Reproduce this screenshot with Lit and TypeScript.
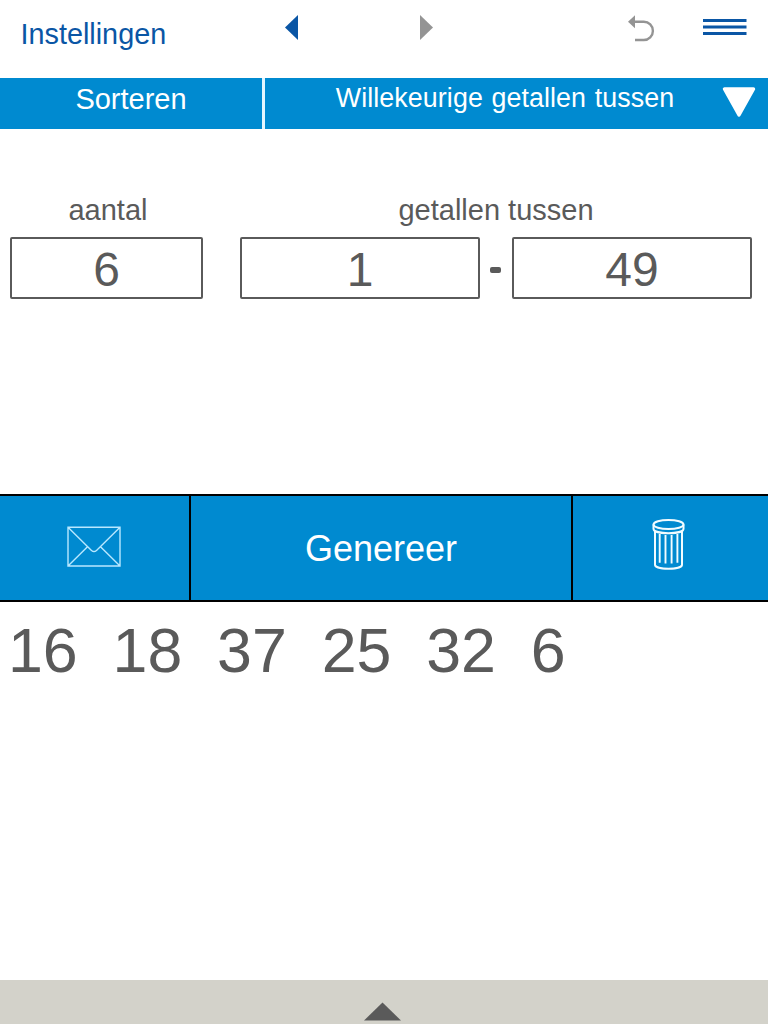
import { LitElement, html, css } from "lit";
import { customElement, state } from "lit/decorators.js";

@customElement("app-root")
export class AppRoot extends LitElement {
  @state() private numbers = [16, 18, 37, 25, 32, 6];

  static styles = css`
    :host {
      display: flex;
      flex-direction: column;
      height: 1024px;
      overflow: hidden;
      background: #fff;
      color: #5a5a5a;
      font-family: "Liberation Sans", Arial, sans-serif;
      font-size: 29px;
    }
    * { box-sizing: border-box; }
    svg { display: block; }
    header {
      height: 78px;
      display: grid;
      grid-template-columns: 285px 134px 208px 75px 66px;
      align-items: start;
    }
    .settings { color: #0a56a5; padding-left: 20.5px; line-height: 69px; font-size: 28.8px; }
    .arrow { margin-top: 15px; }
    .undo { margin-top: 14px; }
    .menu { margin-top: 18px; }
    .tabs {
      height: 51px;
      display: grid;
      grid-template-columns: 262px 1fr 46px;
      background: #008ad0;
      color: #fff;
      text-align: center;
    }
    .tab { line-height: 42px; }
    .mode { border-left: 3px solid #e4f6ff; line-height: 41px; font-size: 26.8px; letter-spacing: .1px; padding-left: 23px; word-spacing: 1px; }
    .form {
      height: 365px;
      padding: 61px 16px 0 10px;
      display: grid;
      grid-template-columns: 193px 512px;
      grid-template-rows: 47px 62px;
      column-gap: 37px;
      text-align: center;
    }
    .label { line-height: 41px; }
    .label.first { padding-left: 3px; }
    .range { display: grid; grid-template-columns: 240px 32px 240px; align-items: center; }
    .field {
      height: 62px;
      border: 2px solid #5a5a5a;
      border-radius: 2px;
      font-size: 48px;
      line-height: 61px;
    }
    .dash { justify-self: center; width: 11px; height: 6px; border-radius: 2px; background: #5a5a5a; margin-top: 3px; margin-right: 1px; }
    .actions {
      height: 108px;
      display: grid;
      grid-template-columns: 189px 384px 1fr;
      border: solid #000;
      border-width: 2px 0;
      background: #008ad0;
      color: #fff;
    }
    .mail { padding: 30px 0 0 67px; }
    .go { border: solid #000; border-width: 0 2px; text-align: center; line-height: 105px; font-size: 36px; }
    .trash { padding: 22px 0 0 78px; }
    .result { flex: 1; padding-left: 8px; white-space: pre; font-size: 62.7px; line-height: 97px; }
    footer { height: 44px; background: #d3d2ca; padding: 22px 0 0 364px; }
  `;

  render() {
    return html`
      <header>
        <div class="settings">Instellingen</div>
        <svg class="arrow" width="13" height="25"><path d="M13 0v25L0 12.5z" fill="#0a56a5"/></svg>
        <svg class="arrow" width="14" height="25"><path d="M1 0v25l13-12.5z" fill="#949494"/></svg>
        <svg class="undo" width="28" height="30"><path d="M1 7.7 8 1.2v13z" fill="#949494"/><path d="M6 7.8h10.8a9.1 9.1 0 0 1 0 18.2H8" fill="none" stroke="#949494" stroke-width="2.4"/></svg>
        <svg class="menu" width="45" height="18"><path d="M1 2.5h43.5M1 9h43.5M1 15.5h43.5" stroke="#0a56a5" stroke-width="3"/></svg>
      </header>
      <div class="tabs">
        <div class="tab">Sorteren</div>
        <div class="tab mode">Willekeurige getallen tussen</div>
        <svg width="46" height="51"><path d="M2.5 11h29L17 37z" fill="#fff" stroke="#fff" stroke-width="3.4" stroke-linejoin="round"/></svg>
      </div>
      <div class="form">
        <div class="label first">aantal</div>
        <div class="label">getallen tussen</div>
        <div class="field">6</div>
        <div class="range">
          <div class="field">1</div>
          <div class="dash"></div>
          <div class="field">49</div>
        </div>
      </div>
      <div class="actions">
        <div class="mail">
          <svg width="54" height="42" fill="none" stroke="#b9e8ff" stroke-width="1.4"><path d="M1 1.2h52v38.8H1zM1 1.2l23.5 23.2q2.5 2.4 5 0L53 1.2M1 40l19.5-19.2M53 40 33.5 20.8"/></svg>
        </div>
        <div class="go">Genereer</div>
        <div class="trash">
          <svg width="36" height="54" fill="none" stroke="#f2fcff" stroke-width="2"><ellipse cx="17.5" cy="6.5" rx="15" ry="4.6"/><path d="M2.5 6.5v4.2c0 6 30 6 30 0V6.5M4 13.5v33.2c0 5.3 27 5.3 27 0V13.5"/><path d="M8.7 16v28.8M14.5 17v28.6M20.6 17v28.6M26.4 16v28.8" stroke-width="1.9"/></svg>
        </div>
      </div>
      <div class="result">${this.numbers.join("  ")}</div>
      <footer><svg width="38" height="22"><path d="M0 18.5 18.5 .5 37 18.5z" fill="#5a5a5a"/></svg></footer>
    `;
  }
}
